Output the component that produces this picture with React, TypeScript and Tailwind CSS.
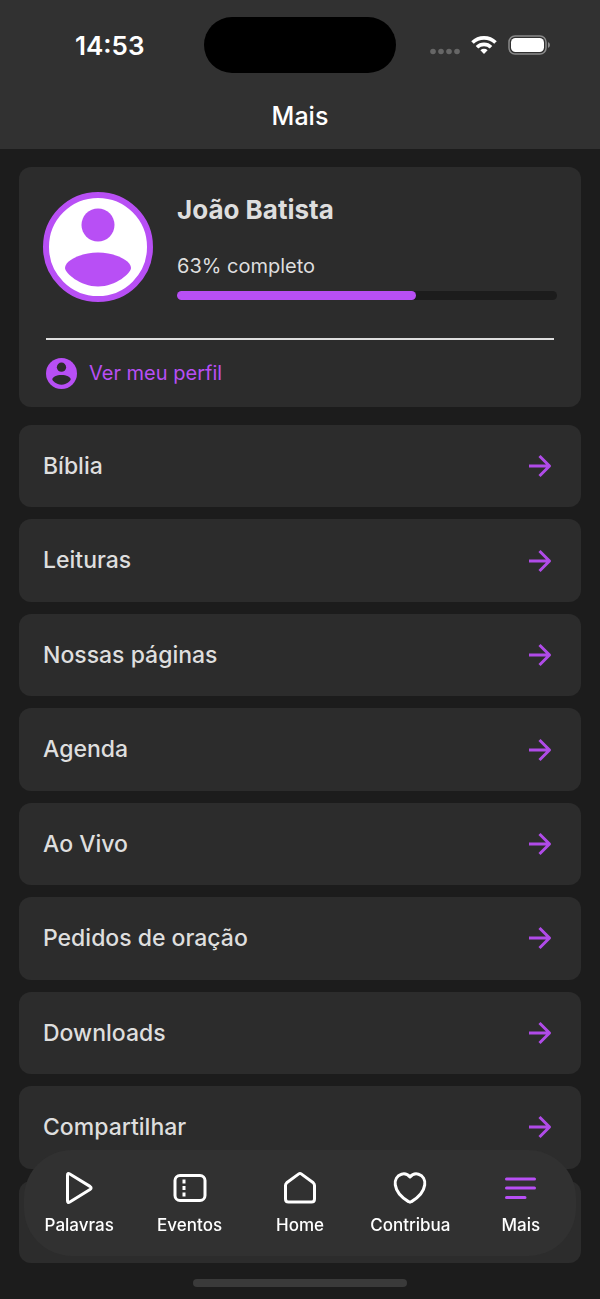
import React from 'react';

const links = [
  'Bíblia',
  'Leituras',
  'Nossas páginas',
  'Agenda',
  'Ao Vivo',
  'Pedidos de oração',
  'Downloads',
  'Compartilhar',
];

const tabs = [
  { label: 'Palavras', icon: <PlayIcon /> },
  { label: 'Eventos', icon: <TicketIcon /> },
  { label: 'Home', icon: <HomeIcon /> },
  { label: 'Contribua', icon: <HeartIcon /> },
  { label: 'Mais', icon: <MenuIcon /> },
];

function PlayIcon() {
  return (
    <svg
      viewBox="0 0 36 36"
      className="size-9 fill-none stroke-white stroke-3"
      strokeLinejoin="round"
    >
      <path d="M6.5 5.2Q6.5 2.6 8.8 4L29 16.4Q31.2 18 29 19.5L8.8 32Q6.5 33.3 6.5 30.7Z" />
    </svg>
  );
}

function TicketIcon() {
  return (
    <svg viewBox="0 0 36 36" className="size-9 fill-none stroke-white stroke-3">
      <rect x="3" y="5.5" width="30" height="25" rx="5" />
      <path d="M12 9.5v4M12 16v4M12 22.5v4" />
    </svg>
  );
}

function HomeIcon() {
  return (
    <svg
      viewBox="0 0 36 36"
      className="size-9 fill-none stroke-white stroke-3"
      strokeLinejoin="round"
    >
      <path d="M16.8 3.9Q18 3 19.2 3.9L31.3 12.8Q32.5 13.8 32.5 15.5V29Q32.5 32 29.5 32H6.5Q3.5 32 3.5 29V15.5Q3.5 13.8 4.7 12.8Z" />
    </svg>
  );
}

function HeartIcon() {
  return (
    <svg
      viewBox="0 0 36 36"
      className="size-9 fill-none stroke-white stroke-3"
      strokeLinejoin="round"
    >
      <path d="M18 7C15.8 4.3 12.8 3.3 9.5 4.2C5 5.5 2.6 9.8 3.3 15C4.3 22 10.5 28 16.5 31.6Q18 32.6 19.5 31.6C25.5 28 31.7 22 32.7 15C33.4 9.8 31 5.5 26.5 4.2C23.2 3.3 20.2 4.3 18 7Z" />
    </svg>
  );
}

function MenuIcon() {
  return (
    <svg
      viewBox="0 0 36 36"
      className="size-9 fill-none stroke-[#b84ff5] stroke-3"
      strokeLinecap="round"
    >
      <path d="M3.5 9h28M3.5 18h28M3.5 27.5h18.5" />
    </svg>
  );
}

function ArrowIcon() {
  return (
    <svg
      viewBox="0 0 24 24"
      className="size-6 fill-none stroke-[#b04be8] stroke-3"
      strokeLinejoin="round"
    >
      <path d="M1 12h20M11.5 2l10 10-10 10" />
    </svg>
  );
}

function StatusBar() {
  return (
    <div className="grid h-[90px] grid-cols-[1fr_auto_1fr] items-center">
      <time className="pl-[75px] text-[26px] font-semibold text-white">
        14:53
      </time>
      <div className="h-14 w-48 rounded-full bg-black" />
      <div className="flex items-center justify-end gap-[11px] pr-[50px]">
        <svg viewBox="0 0 30 20" className="h-5 w-[30px] fill-[#666]">
          <circle cx="3" cy="16.5" r="2.8" />
          <circle cx="11" cy="16.5" r="2.8" />
          <circle cx="19" cy="16.5" r="2.8" />
          <circle cx="27" cy="16.5" r="2.8" />
        </svg>
        <svg viewBox="0 0 26 20" className="h-5 w-[26px] fill-none stroke-white">
          <path d="M1.5 7.5a16.5 16.5 0 0 1 23 0" strokeWidth="3.6" />
          <path d="M6 12.2a10 10 0 0 1 14 0" strokeWidth="3.6" />
          <path
            d="M9.4 15.2a5.3 5.3 0 0 1 7.2 0L13 19Z"
            className="fill-white"
            stroke="none"
          />
        </svg>
        <svg viewBox="0 0 42 20" className="h-5 w-[42px]">
          <rect
            x="1"
            y="1"
            width="37"
            height="18"
            rx="6"
            className="fill-none stroke-[#8a8a8a]"
            strokeWidth="1.5"
          />
          <rect x="3" y="3" width="33" height="14" rx="4.5" className="fill-white" />
          <path d="M40 7q2 1 2 3t-2 3z" className="fill-[#8a8a8a]" />
        </svg>
      </div>
    </div>
  );
}

function ProfileCard() {
  return (
    <section className="rounded-xl bg-[#2c2c2c] px-6 pt-[25px] pb-[18px]">
      <div className="flex items-start gap-6">
        <svg viewBox="0 0 110 110" className="size-[110px] shrink-0 fill-[#b84ff5]">
          <circle cx="55" cy="55" r="52" className="fill-white stroke-[#b84ff5] stroke-6" />
          <circle cx="55" cy="33" r="16.5" />
          <path d="M55 60.5c17 0 33 8 33 15.5c0 5-15 18.5-33 18.5s-33-13.5-33-18.5c0-7.5 16-15.5 33-15.5Z" />
        </svg>
        <div className="flex-1">
          <h2 className="text-[26px] leading-9 font-bold text-[#dedede]">
            João Batista
          </h2>
          <label
            htmlFor="profile-progress"
            className="mt-6 block text-xl leading-7 text-[#dedede]"
          >
            63% completo
          </label>
          <progress
            id="profile-progress"
            value={63}
            max={100}
            className="mt-[11px] block h-[9px] w-full appearance-none overflow-hidden rounded-full [&::-webkit-progress-bar]:bg-[#1c1c1c] [&::-webkit-progress-value]:rounded-r-full [&::-webkit-progress-value]:bg-[#b84ff5]"
          />
        </div>
      </div>
      <hr className="mx-[3px] mt-9 border-t-2 border-[#dedede]" />
      <a
        href="#perfil"
        className="mx-[3px] mt-[17px] flex items-center gap-3 text-[#b84ff5]"
      >
        <svg viewBox="0 0 32 32" className="size-[31px] fill-[#b84ff5]">
          <circle cx="16" cy="16" r="16" />
          <g className="fill-[#2c2c2c]">
            <circle cx="16" cy="9.5" r="4.8" />
            <path d="M16 17.5c5 0 9.5 2.2 9.5 4.5c0 1.5-4 5.5-9.5 5.5s-9.5-4-9.5-5.5c0-2.3 4.5-4.5 9.5-4.5Z" />
          </g>
        </svg>
        <span className="text-xl leading-8">Ver meu perfil</span>
      </a>
    </section>
  );
}

export default function App() {
  return (
    <div className="flex min-h-screen flex-col bg-[#1c1c1c] font-['Inter','Liberation_Sans',sans-serif]">
      <header className="bg-[#313131] pb-[7px]">
        <StatusBar />
        <h1 className="text-center text-[25px] leading-[52px] font-medium text-white">
          Mais
        </h1>
      </header>

      <main className="flex flex-1 flex-col px-[19px] pt-[18px] pb-9">
        <ProfileCard />
        <nav className="mt-[18px] grid flex-1 auto-rows-fr gap-3">
          {links.map((label) => (
            <a
              key={label}
              href="#"
              className="flex min-h-20 items-center justify-between rounded-xl bg-[#2c2c2c] pr-[29px] pl-6 text-[23px] font-medium text-[#dedede]"
            >
              {label}
              <ArrowIcon />
            </a>
          ))}
          <div className="min-h-20 rounded-xl bg-[#2c2c2c]" />
        </nav>
      </main>

      <nav className="fixed inset-x-6 bottom-[43px] grid h-[106px] grid-cols-5 rounded-[48px] bg-[#313131]">
        {tabs.map(({ label, icon }) => (
          <a
            key={label}
            href="#"
            className="flex flex-col items-center gap-1 pt-5 text-[17px] leading-[30px] font-medium text-white"
          >
            {icon}
            {label}
          </a>
        ))}
      </nav>
      <div className="fixed inset-x-0 bottom-3 mx-auto h-2 w-[214px] rounded-full bg-[#3a3a3a]" />
    </div>
  );
}
